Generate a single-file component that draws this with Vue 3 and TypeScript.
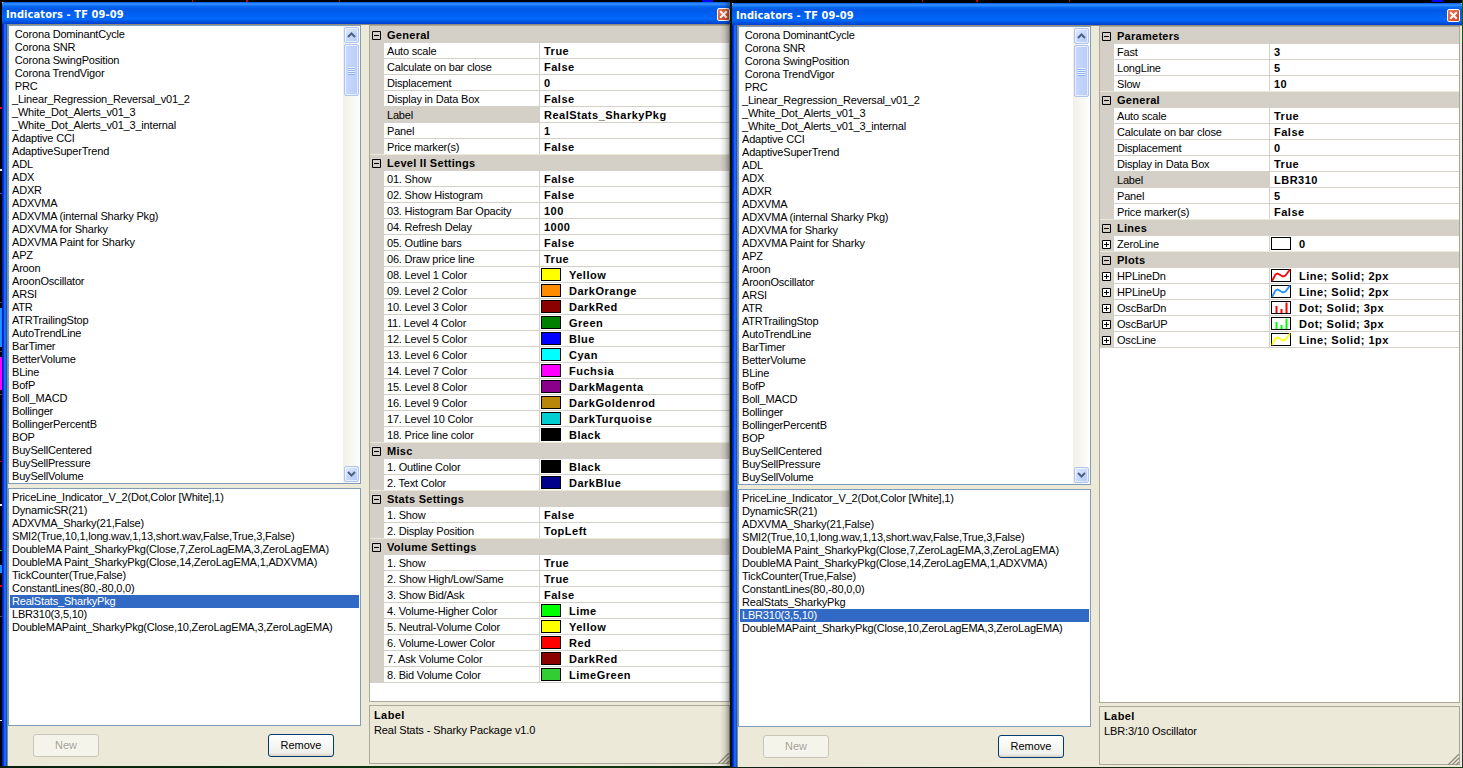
<script setup lang="ts">
interface Row { label: string; value: string; color?: string; icon?: 'line' | 'bars'; active?: boolean; expandable?: boolean }
interface Section { title: string; rows: Row[] }
interface Dialog { id: string; sections: Section[]; selected: number; help: string }

const r = (label: string, value: string, extra: Partial<Row> = {}): Row => ({ label, value, ...extra })

const available = [
  '\u00a0Corona DominantCycle', '\u00a0Corona SNR', '\u00a0Corona SwingPosition', '\u00a0Corona TrendVigor', '\u00a0PRC',
  '_Linear_Regression_Reversal_v01_2', '_White_Dot_Alerts_v01_3', '_White_Dot_Alerts_v01_3_internal',
  'Adaptive CCI', 'AdaptiveSuperTrend', 'ADL', 'ADX', 'ADXR', 'ADXVMA', 'ADXVMA (internal Sharky Pkg)',
  'ADXVMA for Sharky', 'ADXVMA Paint for Sharky', 'APZ', 'Aroon', 'AroonOscillator', 'ARSI', 'ATR',
  'ATRTrailingStop', 'AutoTrendLine', 'BarTimer', 'BetterVolume', 'BLine', 'BofP', 'Boll_MACD', 'Bollinger',
  'BollingerPercentB', 'BOP', 'BuySellCentered', 'BuySellPressure', 'BuySellVolume',
]
const active = [
  'PriceLine_Indicator_V_2(Dot,Color [White],1)', 'DynamicSR(21)', 'ADXVMA_Sharky(21,False)',
  'SMI2(True,10,1,long.wav,1,13,short.wav,False,True,3,False)',
  'DoubleMA Paint_SharkyPkg(Close,7,ZeroLagEMA,3,ZeroLagEMA)',
  'DoubleMA Paint_SharkyPkg(Close,14,ZeroLagEMA,1,ADXVMA)', 'TickCounter(True,False)',
  'ConstantLines(80,-80,0,0)', 'RealStats_SharkyPkg', 'LBR310(3,5,10)',
  'DoubleMAPaint_SharkyPkg(Close,10,ZeroLagEMA,3,ZeroLagEMA)',
]
const general = (display: string, label: string, panel: string): Section => ({
  title: 'General',
  rows: [
    r('Auto scale', 'True'), r('Calculate on bar close', 'False'), r('Displacement', '0'),
    r('Display in Data Box', display), r('Label', label, { active: true }), r('Panel', panel), r('Price marker(s)', 'False'),
  ],
})
const c = (label: string, value: string): Row => r(label, value, { color: value.toLowerCase() })

const dialogs: Dialog[] = [
  {
    id: 'first', selected: 8, help: 'Real Stats - Sharky Package v1.0',
    sections: [
      general('False', 'RealStats_SharkyPkg', '1'),
      { title: 'Level II Settings', rows: [
        r('01. Show', 'False'), r('02. Show Histogram', 'False'), r('03. Histogram Bar Opacity', '100'),
        r('04. Refresh Delay', '1000'), r('05. Outline bars', 'False'), r('06. Draw price line', 'True'),
        c('08. Level 1 Color', 'Yellow'), c('09. Level 2 Color', 'DarkOrange'), c('10. Level 3 Color', 'DarkRed'),
        c('11. Level 4 Color', 'Green'), c('12. Level 5 Color', 'Blue'), c('13. Level 6 Color', 'Cyan'),
        c('14. Level 7 Color', 'Fuchsia'), c('15. Level 8 Color', 'DarkMagenta'), c('16. Level 9 Color', 'DarkGoldenrod'),
        c('17. Level 10 Color', 'DarkTurquoise'), c('18. Price line color', 'Black'),
      ] },
      { title: 'Misc', rows: [c('1. Outline Color', 'Black'), c('2. Text Color', 'DarkBlue')] },
      { title: 'Stats Settings', rows: [r('1. Show', 'False'), r('2. Display Position', 'TopLeft')] },
      { title: 'Volume Settings', rows: [
        r('1. Show', 'True'), r('2. Show High/Low/Same', 'True'), r('3. Show Bid/Ask', 'False'),
        c('4. Volume-Higher Color', 'Lime'), c('5. Neutral-Volume Color', 'Yellow'), c('6. Volume-Lower Color', 'Red'),
        c('7. Ask Volume Color', 'DarkRed'), c('8. Bid Volume Color', 'LimeGreen'),
      ] },
    ],
  },
  {
    id: 'second', selected: 9, help: 'LBR:3/10 Oscillator',
    sections: [
      { title: 'Parameters', rows: [r('Fast', '3'), r('LongLine', '5'), r('Slow', '10')] },
      general('True', 'LBR310', '5'),
      { title: 'Lines', rows: [r('ZeroLine', '0', { color: 'white', expandable: true })] },
      { title: 'Plots', rows: [
        r('HPLineDn', 'Line; Solid; 2px', { color: 'red', icon: 'line', expandable: true }),
        r('HPLineUp', 'Line; Solid; 2px', { color: 'dodgerblue', icon: 'line', expandable: true }),
        r('OscBarDn', 'Dot; Solid; 3px', { color: 'red', icon: 'bars', expandable: true }),
        r('OscBarUP', 'Dot; Solid; 3px', { color: 'lime', icon: 'bars', expandable: true }),
        r('OscLine', 'Line; Solid; 1px', { color: 'yellow', icon: 'line', expandable: true }),
      ] },
    ],
  },
]
</script>

<template>
  <main class="desktop">
    <section v-for="d in dialogs" :key="d.id" class="window" :class="d.id">
      <header class="titlebar">
        <h1>Indicators - TF 09-09</h1>
        <button class="close" aria-label="Close">
          <svg width="11" height="11" viewBox="0 0 11 11"><path d="M2.2 2.2L8.8 8.8M8.8 2.2L2.2 8.8" stroke="#fff" stroke-width="2" /></svg>
        </button>
      </header>
      <div class="body">
        <div class="left">
          <div class="listbox available">
            <ul><li v-for="n in available" :key="n">{{ n }}</li></ul>
            <div class="scrollbar">
              <div class="arrow"><svg width="9" height="6" viewBox="0 0 9 6"><path d="M1 5L4.5 1.5L8 5" /></svg></div>
              <div class="thumb"><i></i><i></i><i></i><i></i></div>
              <div class="track"></div>
              <div class="arrow"><svg width="9" height="6" viewBox="0 0 9 6"><path d="M1 1L4.5 4.5L8 1" /></svg></div>
            </div>
          </div>
          <div class="listbox chosen">
            <ul><li v-for="(n, i) in active" :key="n" :class="{ selected: i === d.selected }">{{ n }}</li></ul>
          </div>
          <div class="buttons">
            <button class="btn" disabled>New</button>
            <button class="btn primary">Remove</button>
          </div>
        </div>
        <div class="right">
          <div class="grid">
            <template v-for="s in d.sections" :key="s.title">
              <div class="category">
                <span class="gutter"><svg width="9" height="9" viewBox="0 0 9 9"><path d="M.5 .5H8.5V8.5H.5ZM2 4.5H7" /></svg></span>
                <span>{{ s.title }}</span>
              </div>
              <div v-for="row in s.rows" :key="row.label" class="row" :class="{ active: row.active }">
                <span class="gutter"><svg v-if="row.expandable" class="plus" width="9" height="9" viewBox="0 0 9 9"><path d="M.5 .5H8.5V8.5H.5ZM2 4.5H7M4.5 2V7" /></svg></span>
                <span class="label">{{ row.label }}</span>
                <span class="value">
                  <svg v-if="row.color" class="swatch" width="20" height="13" viewBox="0 0 20 13">
                    <rect x=".5" y=".5" width="19" height="12" :fill="row.icon ? 'white' : row.color" stroke="#000" />
                    <path v-if="row.icon === 'line'" d="M1 12L4.5 5.5L6.5 4.5L12 7.5L14.5 6.5L19 .5" fill="none" :stroke="row.color" stroke-width="1.8" />
                    <path v-if="row.icon === 'bars'" d="M5.5 5V12M10.5 8V12M15.5 1.5V12" :stroke="row.color" stroke-width="2" />
                  </svg>
                  {{ row.value }}
                </span>
              </div>
            </template>
          </div>
          <div class="help">
            <strong>Label</strong>
            <p>{{ d.help }}</p>
            <svg class="grip" width="11" height="11" viewBox="0 0 11 11"><path d="M0 11L11 0M4 11L11 4M8 11L11 8" stroke="#8f8b7c" stroke-width="1.3" /></svg>
          </div>
        </div>
      </div>
    </section>
  </main>
</template>

<style>
body { background: #000; overflow: hidden; }
</style>
<style scoped>
* { box-sizing: border-box; }
.desktop {
  --chart: linear-gradient(#000 107px, #e00000 107px 109px, #000 109px 169px, #fff 169px 171px, #000 171px 193px, #2a5bd0 193px 194px, #000 194px 302px, #555 302px 303px, #000 303px 308px, #1e90ff 308px 347px, #000 347px 351px, #555 351px 352px, #000 352px 357px, #ff00ff 357px 390px, #000 390px 394px, #555 394px 395px, #000 395px 461px, #c00000 461px 462px, #000 462px 504px, #fff 504px 506px, #000 506px 550px, #00c800 550px 551px, #000 551px 565px, #1e90ff 565px 573px, #000 573px 585px, #e00000 585px 587px, #000 587px 616px, #555 616px 617px, #000 617px 720px, #fff 720px 721px, #000 721px);
  display: flex; width: 1463px; height: 768px; padding-left: 2px; overflow: hidden;
  font: 11px "Liberation Sans", Arial, sans-serif; letter-spacing: -.19px; color: #000;
  background:
    linear-gradient(90deg, transparent 192px, #d00000 192px 193px, transparent 193px 246px, #d00000 246px 248px, transparent 248px 339px, #d00000 339px 340px, transparent 340px 702px, #0000ff 702px 713px, transparent 713px 922px, #d00000 922px 923px, transparent 923px 976px, #d00000 976px 978px, transparent 978px 1069px, #d00000 1069px 1070px, transparent 1070px 1432px, #0000ff 1432px 1443px, transparent 1443px) 0 0 / 1463px 2px no-repeat,
    linear-gradient(90deg, #08200b, #103d12 40%, #0b170d 55%, #164018) 0 766px / 1463px 2px no-repeat,
    var(--chart) 0 0 / 2px 768px no-repeat,
    linear-gradient(#0b5a1c 43px, #333 43px) 1462px 0 / 1px 768px no-repeat,
    #000;
}
.window { display: flex; flex-direction: column; width: 730px; height: 764px; margin-top: 2px; flex: none; background: #ece9d8; position: relative; }
.window.second { margin-top: 3px; }
.window::before { content: ""; position: absolute; left: 0; top: 22px; bottom: 0; width: 6px; background: linear-gradient(90deg, #0019cf 1px, #0831d9 1px 2px, #166aee 2px 4px, #0855dd 4px 5px, #8d8b7e 5px); }
.window.first::after { content: ""; position: absolute; right: 0; top: 0; bottom: 0; width: 12px; background: linear-gradient(90deg, transparent, rgba(0,0,0,.1) 5px, rgba(0,0,0,.38) 10px, #001408 10px 12px); }
.titlebar { height: 22px; flex: none; display: flex; align-items: center; padding: 2px 2px 0 4px; border-radius: 2px 2px 0 0; background: linear-gradient(#0058e6, #3a93ff 2px, #0a6bf2 4px, #0058e6 7px, #0062f5 14px, #0069fc 17px, #0050d8 20px, #003dd7); }
.titlebar h1 { margin: 0; flex: 1; font: bold 11px "DejaVu Sans Condensed", "DejaVu Sans", sans-serif; letter-spacing: .1px; color: #fff; }
.close { width: 13px; height: 13px; padding: 0; border: 1px solid #fff; border-radius: 2px; background: linear-gradient(135deg, #e97a5c, #d8401c); display: flex; align-items: center; justify-content: center; }
.close svg { flex: none; }
.body { flex: 1; min-height: 0; display: flex; border-top: 1px solid #8d8b7e; padding: 0 2px 0 6px; }
.left { width: 353px; margin-right: 8px; flex: none; }
.listbox { border: 1px solid #7f9db9; background: #fff; display: flex; }
ul { list-style: none; margin: 0; padding: 2px 1px; flex: 1; }
li { height: 13px; line-height: 13px; padding-left: 2px; white-space: nowrap; }
li.selected { background: #316ac5; color: #fff; }
.available { height: 459px; }
.chosen { height: 238px; margin-top: 4px; }
.scrollbar { width: 17px; padding: 1px 0; display: flex; flex-direction: column; align-items: center; background: linear-gradient(90deg, #f1f0e8, #fefefb); }
.arrow, .thumb { width: 15px; border: 1px solid #b0c4ef; border-radius: 2px; background: linear-gradient(135deg, #e1eafe, #aec8f7); display: flex; align-items: center; justify-content: center; flex: none; box-shadow: inset 0 0 0 1px #fff9; }
.arrow { height: 16px; }
.arrow path { fill: none; stroke: #4d6185; stroke-width: 2; }
.thumb { height: 52px; margin-top: 1px; flex-direction: column; gap: 1px; background: linear-gradient(90deg, #c9d8fc, #b9cdfa); }
.thumb i { width: 7px; height: 1px; background: #eef4fe; box-shadow: 0 1px #8cb0f8; }
.track { flex: 1; }
.buttons { display: flex; justify-content: space-between; padding: 8px 27px 0 25px; }
.btn { width: 66px; height: 23px; padding: 0 0 2px; font: inherit; border: 1px solid #c9c7ba; border-radius: 3px; background: #f5f4ea; color: #a1a192; text-shadow: 1px 1px #fff; }
.btn.primary { border-color: #003c74; background: linear-gradient(#fff, #f0f0ea 85%, #d6d0c5); color: #000; text-shadow: none; letter-spacing: 0; }
.right { width: 361px; flex: none; }
.grid { height: 677px; border: 1px solid #aca899; background: linear-gradient(#d4d0c8 1px, #fff 1px); padding-top: 1px; }
.category, .row { height: 16px; display: flex; line-height: 16px; }
.category { font-weight: bold; letter-spacing: .28px; background: #d4d0c8; }
.row + .category { box-shadow: inset 0 1px #ece9d8; margin-top: -1px; height: 17px; padding-top: 1px; position: relative; }
.gutter { width: 14px; flex: none; background: #d4d0c8; display: flex; align-items: center; padding-left: 2px; }
.gutter svg path { fill: none; stroke: #000; }
.gutter .plus path { fill: #fff; }
.category > span:last-child { padding-left: 3px; }
.label { width: 155px; padding-left: 3px; border-bottom: 1px solid #d4d0c8; white-space: nowrap; }
.row.active .label { background: #d4d0c8; }
.value { flex: 1; padding-left: 4px; border-left: 1px solid #d4d0c8; border-bottom: 1px solid #d4d0c8; font-weight: bold; letter-spacing: .5px; display: flex; white-space: nowrap; }
.swatch { margin: 1px 8px 0 -3px; flex: none; }
.help { position: relative; height: 59px; margin-top: 3px; border: 1px solid #aca899; padding: 2px 4px; line-height: 14px; }
.help strong { display: block; letter-spacing: .4px; }
.help p { margin: 1px 0 0; letter-spacing: -.1px; }
.grip { position: absolute; right: 0; bottom: -1px; }
</style>
